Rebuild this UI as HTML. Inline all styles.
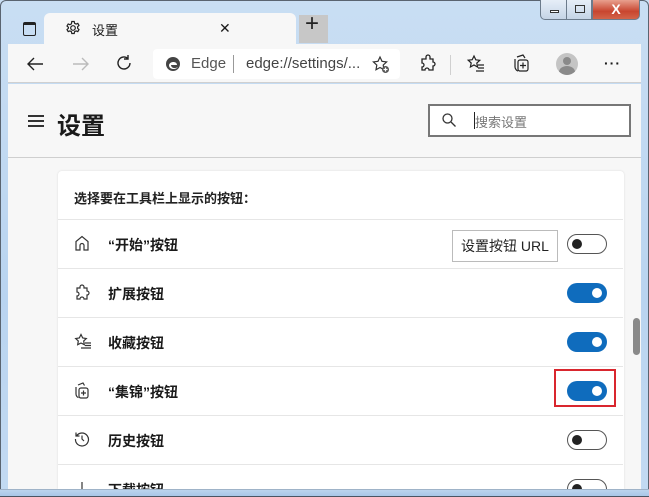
<!DOCTYPE html>
<html style="width:649px;height:497px;overflow:hidden"><head><meta charset="utf-8"><style>
*{margin:0;padding:0;box-sizing:border-box}
body{width:649px;height:497px;overflow:hidden;font-family:"Liberation Sans","Noto Sans CJK SC",sans-serif;background:linear-gradient(#c9def3,#b9d4f0 60%,#c3daf2);position:relative;color:#1a1a1a}
.frame{position:absolute;left:0;top:0;width:649px;height:497px;border:1px solid #5a6470;border-radius:6px 6px 0 0}
.abs{position:absolute}
.ctl{position:absolute;top:0;height:20px;border:1px solid #6c7b8c;border-top:none}
.toggle{position:absolute;left:509px;width:40px;height:20px;border-radius:10px}
.on{background:#0f6cbd}
.on::after{content:"";position:absolute;right:5px;top:5px;width:10px;height:10px;border-radius:50%;background:#fff}
.off{border:1.5px solid #555;background:#fff}
.off::after{content:"";position:absolute;left:4px;top:3.5px;width:10px;height:10px;border-radius:50%;background:#222}
.row{position:absolute;left:0;width:565px;height:49px;border-top:1px solid #e6e6e6}
.row .lbl{position:absolute;left:50px;top:15px;font-size:14px;font-weight:bold}
.row svg{position:absolute;left:16px;top:15px}
.row .toggle{top:14px}
</style></head><body>
<div class="frame"></div>
<div class="ctl" style="left:540px;width:27px;background:linear-gradient(#e6eef8,#c5d4e6);border-radius:0 0 0 5px"><div class="abs" style="left:9px;top:10px;width:9px;height:3px;border:1px solid #333;background:#fff"></div></div>
<div class="ctl" style="left:566px;width:26px;background:linear-gradient(#e6eef8,#c5d4e6)"><div class="abs" style="left:8px;top:5px;width:10px;height:8px;border:1px solid #333"></div></div>
<div class="ctl" style="left:592px;width:48px;background:linear-gradient(#e8a08e,#c8452f 60%,#d2644a);border-radius:0 0 5px 0;color:#fff;font-weight:bold;font-size:14px;text-align:center;line-height:18px">X</div>
<div class="abs" style="left:23px;top:22px;width:13px;height:14px;border:1.6px solid #222;border-top-width:3px;border-radius:2px"></div>
<div class="abs" style="left:44px;top:13px;width:252px;height:32px;background:#f7f7f7;border-radius:6px 6px 0 0"></div>
<svg class="abs" style="left:65px;top:20px" width="16" height="16" viewBox="0 0 16 16" fill="none" stroke="#222" stroke-width="1.2"><circle cx="8" cy="8" r="2.3"/><path d="M6.8 1.5h2.4l.4 1.8 1.5.8 1.7-.7 1.2 2-1.4 1.3v1.6l1.4 1.3-1.2 2-1.7-.7-1.5.8-.4 1.8H6.8l-.4-1.8-1.5-.8-1.7.7-1.2-2 1.4-1.3V7.3L2 6l1.2-2 1.7.7 1.5-.8z"/></svg>
<div class="abs" style="left:92px;top:20px;font-size:13px">设置</div>
<div class="abs" style="left:219px;top:20px;font-size:14px">✕</div>
<div class="abs" style="left:299px;top:15px;width:29px;height:28px;background:#c7c7c7"></div>
<div class="abs" style="left:305px;top:10px;font-size:24px;font-weight:300;color:#222">+</div>
<div class="abs" style="left:8px;top:44px;width:633px;height:39px;background:#f7f7f7;border-bottom:1px solid #d0d0d0"></div>
<svg class="abs" style="left:26px;top:55px" width="18" height="18" viewBox="0 0 18 18" fill="none" stroke="#222" stroke-width="1.4"><path d="M17 9H2M8 3L2 9l6 6"/></svg>
<svg class="abs" style="left:72px;top:55px" width="18" height="18" viewBox="0 0 18 18" fill="none" stroke="#bbb" stroke-width="1.4"><path d="M1 9h15M10 3l6 6-6 6"/></svg>
<svg class="abs" style="left:115px;top:54px" width="18" height="18" viewBox="0 0 18 18" fill="none" stroke="#222" stroke-width="1.4"><path d="M15 9a6 6 0 1 1-2-4.5M13 1v4h-4"/></svg>
<div class="abs" style="left:153px;top:49px;width:247px;height:30px;background:#fff;border-radius:4px"></div>
<svg class="abs" style="left:165px;top:56px" width="16" height="16" viewBox="0 0 16 16"><circle cx="8" cy="8" r="7" fill="#444"/><path d="M4 9c1-4 8-4 8 0H6c0 3 4 4 7 2-2 3-9 3-9-2z" fill="#fff"/></svg>
<div class="abs" style="left:191px;top:55px;font-size:15px;color:#555">Edge</div>
<div class="abs" style="left:233px;top:55px;width:1px;height:18px;background:#999"></div>
<div class="abs" style="left:246px;top:55px;font-size:15px;color:#444">edge://settings/...</div>
<svg class="abs" style="left:371px;top:55px" width="20" height="20" viewBox="0 0 20 20" fill="none" stroke="#333" stroke-width="1.2"><path d="M9 2l2 4.3 4.6.6-3.4 3.2.8 4.6L9 12.5 5 14.7l.8-4.6L2.4 6.9l4.6-.6z"/><circle cx="14.5" cy="14.5" r="3.5" fill="#555" stroke="none"/><path d="M14.5 12.5v4M12.5 14.5h4" stroke="#fff"/></svg>
<svg class="abs" style="left:418px;top:54px" width="20" height="20" viewBox="0 0 20 20" fill="none" stroke="#222" stroke-width="1.3"><path d="M8 3a2 2 0 0 1 4 0v2h3v3a2 2 0 0 1 0 4v4h-4a2 2 0 0 0-4 0H4v-3a2 2 0 0 0 0-4V5h4z"/></svg>
<div class="abs" style="left:450px;top:55px;width:1px;height:20px;background:#d0d0d0"></div>
<svg class="abs" style="left:466px;top:54px" width="20" height="20" viewBox="0 0 20 20" fill="none" stroke="#222" stroke-width="1.2"><path d="M8 2l1.8 3.8 4 .5-3 2.8.8 4L8 11l-3.6 2 .8-4-3-2.8 4-.5z"/><path d="M12 11h6M12 14h6M10 17h8"/></svg>
<svg class="abs" style="left:512px;top:53px" width="20" height="22" viewBox="0 0 20 22" fill="none" stroke="#222" stroke-width="1.2"><path d="M5 4l6-2 2 3M3 6v8c0 2 2 4 3 4"/><rect x="6" y="7" width="10" height="11" rx="2"/><path d="M11 9.5v6M8 12.5h6"/></svg>
<div class="abs" style="left:556px;top:53px;width:22px;height:22px;border-radius:50%;background:#c4c4c4;overflow:hidden"><div class="abs" style="left:7px;top:4px;width:8px;height:8px;border-radius:50%;background:#8a8a8a"></div><div class="abs" style="left:3px;top:13px;width:16px;height:12px;border-radius:50%;background:#8a8a8a"></div></div>
<div class="abs" style="left:604px;top:55px;font-size:14px;font-weight:bold;letter-spacing:1px">···</div>
<div class="abs" style="left:8px;top:84px;width:633px;height:405px;background:#f7f7f7"></div>
<div class="abs" style="left:8px;top:157px;width:633px;height:1px;background:#cfcfcf"></div>
<div class="abs" style="left:28px;top:115px;width:16px;height:2px;background:#333;box-shadow:0 5px 0 #333,0 10px 0 #333"></div>
<div class="abs" style="left:57px;top:106px;font-size:24px;font-weight:bold">设置</div>
<div class="abs" style="left:428px;top:104px;width:203px;height:33px;border:2px solid #777;background:#fff"></div>
<svg class="abs" style="left:441px;top:112px" width="16" height="16" viewBox="0 0 16 16" fill="none" stroke="#333" stroke-width="1.3"><circle cx="6.5" cy="6.5" r="4.5"/><path d="M10 10l4.5 4.5"/></svg>
<div class="abs" style="left:474px;top:112px;width:1px;height:17px;background:#222"></div>
<div class="abs" style="left:475px;top:112px;font-size:13px;color:#777">搜索设置</div>
<div class="abs" style="left:58px;top:171px;width:566px;height:318px;background:#fff;border-radius:4px 4px 0 0;box-shadow:0 0 2px rgba(0,0,0,.12);overflow:hidden">
 <div class="abs" style="left:16px;top:17px;font-size:13px;font-weight:bold;color:#222">选择要在工具栏上显示的按钮：</div>
 <div class="row" style="top:48px"><svg width="16" height="16" viewBox="0 0 16 16" fill="none" stroke="#333" stroke-width="1.2"><path d="M2 15V6.5L8 1.5l6 5V15h-4v-4.5a2 2 0 0 0-4 0V15z"/></svg><div class="lbl">“开始”按钮</div>
  <div class="abs" style="left:394px;top:10px;width:106px;height:32px;border:1px solid #bbb;font-size:14px;text-align:center;line-height:30px;color:#222">设置按钮 URL</div><div class="toggle off"></div></div>
 <div class="row" style="top:97px"><svg width="16" height="18" viewBox="0 0 16 18" fill="none" stroke="#333" stroke-width="1.2"><path d="M6 3a2 2 0 0 1 4 0v1h3v3a2 2 0 0 1 0 4v4H10a2 2 0 0 0-4 0H3v-3a2 2 0 0 0 0-4V4h3z"/></svg><div class="lbl">扩展按钮</div><div class="toggle on"></div></div>
 <div class="row" style="top:146px"><svg width="18" height="18" viewBox="0 0 18 18" fill="none" stroke="#333" stroke-width="1.2"><path d="M7 1.5l1.7 3.5 3.6.5-2.6 2.5.6 3.7L7 10l-3.3 1.7.6-3.7L1.7 5.5l3.6-.5z"/><path d="M11 10h6M11 12.5h6M7 15h10"/></svg><div class="lbl">收藏按钮</div><div class="toggle on"></div></div>
 <div class="row" style="top:195px"><svg width="18" height="18" viewBox="0 0 18 18" fill="none" stroke="#333" stroke-width="1.2"><path d="M4 3l5-2 1.5 2.5M2 5v7c0 2 1.5 3.5 2.5 3.5"/><rect x="5" y="6" width="9" height="10" rx="2"/><path d="M9.5 8.5v5M7 11h5"/></svg><div class="lbl">“集锦”按钮</div><div class="toggle on"></div>
  <div class="abs" style="left:496px;top:2px;width:62px;height:38px;border:2px solid #d9262e"></div></div>
 <div class="row" style="top:244px"><svg width="16" height="16" viewBox="0 0 16 16" fill="none" stroke="#333" stroke-width="1.2"><path d="M2.5 5A6.5 6.5 0 1 1 1.5 8M2 1.5V5h3.5M8 4.5V8l2 2"/></svg><div class="lbl">历史按钮</div><div class="toggle off"></div></div>
 <div class="row" style="top:293px"><svg width="16" height="16" viewBox="0 0 16 16" fill="none" stroke="#333" stroke-width="1.2"><path d="M8 2v10"/></svg><div class="lbl">下载按钮</div><div class="toggle off"></div></div>
</div>
<div class="abs" style="left:633px;top:318px;width:7px;height:37px;border-radius:4px;background:#8a8a8a"></div>
<div class="abs" style="left:0;top:489px;width:649px;height:8px;background:linear-gradient(#bcd4ee,#a9c7e8);border-top:1px solid #9fb3c8;border-bottom:1px solid #4a5563"></div>
</body></html>
